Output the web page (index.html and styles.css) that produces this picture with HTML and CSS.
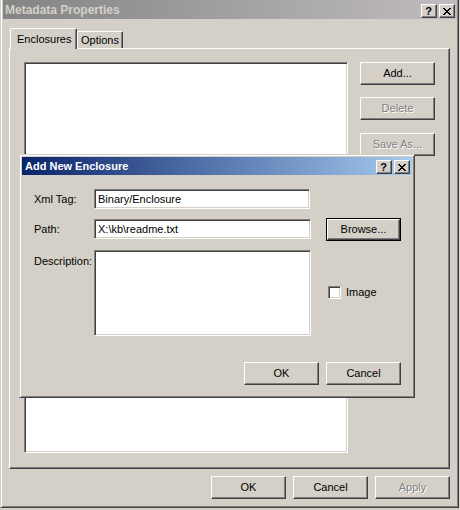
FILE: index.html
```html
<!DOCTYPE html>
<html>
<head>
<meta charset="utf-8">
<title>Metadata Properties</title>
<link rel="stylesheet" href="styles.css">
</head>
<body>
<div class="window">
  <div class="titlebar inactive">
    <span class="title-text">Metadata Properties</span>
    <div class="cap-buttons">
      <span class="cap-btn help">?</span>
      <span class="cap-btn close"><svg width="8" height="7" viewBox="0 0 8 7" shape-rendering="crispEdges"><path d="M0 0h2v1H0z M6 0h2v1H6z M1 1h2v1H1z M5 1h2v1H5z M2 2h4v1H2z M3 3h2v1H3z M2 4h4v1H2z M1 5h2v1H1z M5 5h2v1H5z M0 6h2v1H0z M6 6h2v1H6z" fill="#000"/></svg></span>
    </div>
  </div>
  <div class="tabs">
    <div class="tab selected">Enclosures</div>
    <div class="tab">Options</div>
  </div>
  <div class="panel">
    <div class="listbox"></div>
    <div class="side-buttons">
      <div class="btn">Add...</div>
      <div class="btn disabled">Delete</div>
      <div class="btn disabled save">Save As...</div>
    </div>
  </div>
  <div class="footer">
    <div class="btn">OK</div>
    <div class="btn">Cancel</div>
    <div class="btn disabled">Apply</div>
  </div>

  <div class="dialog">
    <div class="titlebar active small">
      <span class="title-text">Add New Enclosure</span>
      <div class="cap-buttons">
        <span class="cap-btn help">?</span>
        <span class="cap-btn close"><svg width="8" height="7" viewBox="0 0 8 7" shape-rendering="crispEdges"><path d="M0 0h2v1H0z M6 0h2v1H6z M1 1h2v1H1z M5 1h2v1H5z M2 2h4v1H2z M3 3h2v1H3z M2 4h4v1H2z M1 5h2v1H1z M5 5h2v1H5z M0 6h2v1H0z M6 6h2v1H6z" fill="#000"/></svg></span>
      </div>
    </div>
    <div class="dialog-body">
      <div class="row row-xml">
        <label class="field-label">Xml Tag:</label>
        <div class="edit edit-xml">Binary/Enclosure</div>
      </div>
      <div class="row row-path">
        <label class="field-label lbl-path">Path:</label>
        <div class="edit edit-path">X:\kb\readme.txt</div>
        <div class="default-wrap"><div class="btn inner">Browse...</div></div>
      </div>
      <div class="row row-desc">
        <label class="field-label lbl-desc">Description:</label>
        <div class="edit memo"></div>
        <div class="check-wrap">
          <span class="checkbox"></span>
          <span class="check-label">Image</span>
        </div>
      </div>
      <div class="row dialog-buttons">
        <div class="btn">OK</div>
        <div class="btn">Cancel</div>
      </div>
    </div>
  </div>
</div>
</body>
</html>
```

FILE: styles.css
```css
* { box-sizing: border-box; }

html, body {
  margin: 0;
  padding: 0;
}

body {
  width: 460px;
  height: 510px;
  overflow: hidden;
  background: #d4d0c8;
  font-family: "Liberation Sans", Arial, sans-serif;
  font-size: 11px;
  color: #000;
}

.window {
  position: relative;
  width: 459px;
  height: 508px;
  background: #d4d0c8;
  border-left: 1px solid #d4d0c8;
  border-right: 1px solid #404040;
  border-bottom: 1px solid #404040;
  box-shadow: inset 1px 0 #fff, inset -1px -1px #808080;
  padding: 0 1px 2px 2px;
}

/* ---------- title bars ---------- */
.titlebar {
  display: flex;
  justify-content: space-between;
  align-items: flex-start;
  height: 19px;
  padding: 0 2px 0 2px;
}

.titlebar.inactive {
  background: linear-gradient(to right, #848484, #c0bcc0);
  color: #d4d0c8;
}

.titlebar.active {
  background: linear-gradient(to right, #0a246a, #a6caf0);
  color: #fff;
}

.title-text {
  font-weight: bold;
  font-size: 12px;
  line-height: 17px;
  padding-top: 2px;
  white-space: nowrap;
}

.titlebar.small {
  height: 18px;
  padding-left: 3px;
}

.titlebar.small .title-text {
  font-size: 11px;
  line-height: 18px;
  padding-top: 0;
}

.cap-buttons {
  display: flex;
  gap: 2px;
  padding-top: 4px;
}

.titlebar.small .cap-buttons {
  padding-top: 3px;
}

.cap-btn {
  width: 16px;
  height: 14px;
  display: flex;
  align-items: center;
  justify-content: center;
  background: #d4d0c8;
  border: 1px solid;
  border-color: #fff #404040 #404040 #fff;
  box-shadow: inset -1px -1px #808080;
  color: #000;
}

.cap-btn.help {
  font-weight: bold;
  font-size: 11px;
  line-height: 12px;
  padding-right: 1px;
}

.cap-btn.close svg {
  display: block;
  margin-left: -1px;
}

/* ---------- tabs ---------- */
.tabs {
  display: flex;
  align-items: flex-end;
  height: 20px;
  margin-top: 9px;
  padding-left: 7px;
  position: relative;
  z-index: 1;
}

.tab {
  height: 17px;
  padding: 1px 4px 0 4px;
  line-height: 14px;
  background: #d4d0c8;
  border: 1px solid;
  border-bottom: none;
  border-color: #fff #404040 #404040 #fff;
  border-radius: 2px 2px 0 0;
  box-shadow: inset -1px 0 #808080;
  white-space: nowrap;
}

.tab.selected {
  width: 67px;
  height: 21px;
  margin-bottom: -1px;
  padding: 3px 0 0 6px;
}

.tab:not(.selected) {
  width: 46px;
  padding-left: 3px;
}

/* ---------- panel ---------- */
.panel {
  display: flex;
  align-items: flex-start;
  width: 441px;
  height: 421px;
  margin-left: 6px;
  border: 1px solid;
  border-color: #fff #404040 #404040 #fff;
  box-shadow: inset -1px -1px #808080;
  padding: 13px 0 0 14px;
}

.listbox {
  width: 324px;
  height: 391px;
  background: #fff;
  border: 1px solid;
  border-color: #808080 #fff #fff #808080;
  box-shadow: inset 1px 1px #404040, inset -1px -1px #d4d0c8;
}

.side-buttons {
  display: flex;
  flex-direction: column;
  margin-left: 12px;
}

.side-buttons .btn + .btn {
  margin-top: 12px;
}

.side-buttons .btn.save {
  margin-top: 13px;
}

/* ---------- buttons ---------- */
.btn {
  width: 75px;
  height: 23px;
  line-height: 21px;
  text-align: center;
  background: #d4d0c8;
  border: 1px solid;
  border-color: #fff #404040 #404040 #fff;
  box-shadow: inset -1px -1px #808080;
  white-space: nowrap;
}

.btn.disabled {
  color: #808080;
  text-shadow: 1px 1px #fff;
}

.footer {
  display: flex;
  justify-content: flex-end;
  gap: 7px;
  margin-top: 7px;
  padding-right: 7px;
}

/* ---------- dialog ---------- */
.dialog {
  position: absolute;
  left: 18px;
  top: 154px;
  width: 396px;
  height: 244px;
  background: #d4d0c8;
  border: 1px solid;
  border-color: #d4d0c8 #404040 #404040 #d4d0c8;
  box-shadow: inset 1px 1px #fff, inset -1px -1px #808080;
  padding: 2px;
}

.dialog-body {
  padding: 14px 11px 0 12px;
}

.row {
  display: flex;
  align-items: flex-start;
}

.field-label {
  width: 60px;
  line-height: 20px;
  white-space: nowrap;
}

.edit {
  height: 20px;
  background: #fff;
  border: 1px solid;
  border-color: #808080 #fff #fff #808080;
  box-shadow: inset 1px 1px #404040, inset -1px -1px #d4d0c8;
  padding: 0 3px;
  line-height: 18px;
  white-space: nowrap;
}

.edit-xml { width: 216px; }

.row-path { margin-top: 9px; }

.lbl-path { margin-top: 1px; }

.edit-path {
  width: 217px;
  margin-top: 1px;
}

.default-wrap {
  margin-left: 15px;
  width: 75px;
  height: 23px;
  border: 1px solid #000;
}

.btn.inner {
  width: 73px;
  height: 21px;
  line-height: 19px;
}

.row-desc { margin-top: 9px; }

.lbl-desc { margin-top: 1px; }

.memo {
  width: 217px;
  height: 86px;
}

.check-wrap {
  display: flex;
  align-items: center;
  margin-left: 17px;
  margin-top: 36px;
}

.checkbox {
  width: 13px;
  height: 13px;
  background: #fff;
  border: 1px solid;
  border-color: #808080 #fff #fff #808080;
  box-shadow: inset 1px 1px #404040, inset -1px -1px #d4d0c8;
}

.check-label {
  margin-left: 5px;
  line-height: 13px;
}

.dialog-buttons {
  justify-content: flex-end;
  gap: 7px;
  margin-top: 26px;
}
```
